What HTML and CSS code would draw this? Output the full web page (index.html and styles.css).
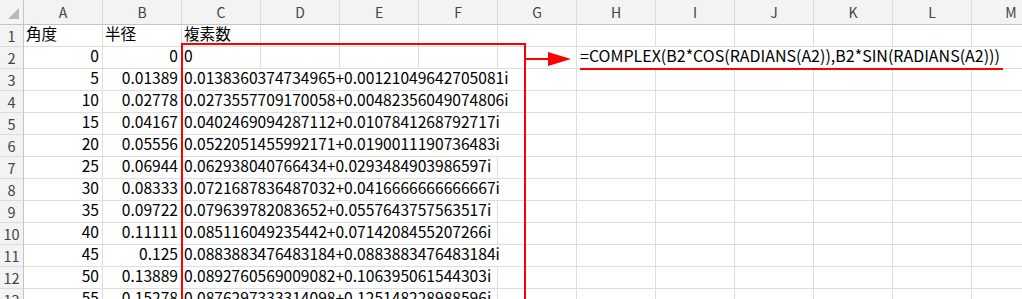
FILE: index.html
```html
<!DOCTYPE html>
<html lang="ja">
<head>
<meta charset="utf-8">
<title>COMPLEX</title>
<link rel="stylesheet" href="styles.css">
</head>
<body>
<div class="sheet">
  <div class="grid">
    <div class="corner"><svg width="23" height="24" viewBox="0 0 23 24"><polygon points="19,8 19,19 8,19" fill="#b9b9b9"/></svg></div>
    <div class="ch">A</div><div class="ch">B</div><div class="ch">C</div><div class="ch">D</div><div class="ch">E</div><div class="ch">F</div><div class="ch">G</div><div class="ch">H</div><div class="ch">I</div><div class="ch">J</div><div class="ch">K</div><div class="ch">L</div><div class="ch">M</div>

    <div class="rh">1</div><div class="c">角度</div><div class="c">半径</div><div class="c">複素数</div><div class="c"></div><div class="c"></div><div class="c"></div><div class="c"></div><div class="c"></div><div class="c"></div><div class="c"></div><div class="c"></div><div class="c"></div><div class="c"></div>

    <div class="rh">2</div><div class="c n">0</div><div class="c n">0</div><div class="c">0</div><div class="c"></div><div class="c"></div><div class="c"></div><div class="c"></div><div class="c formula">=COMPLEX(B2*COS(RADIANS(A2)),B2*SIN(RADIANS(A2)))</div>

    <div class="rh">3</div><div class="c n">5</div><div class="c n">0.01389</div><div class="c s5">0.0138360374734965+0.00121049642705081i</div><div class="c"></div><div class="c"></div><div class="c"></div><div class="c"></div><div class="c"></div><div class="c"></div>

    <div class="rh">4</div><div class="c n">10</div><div class="c n">0.02778</div><div class="c s5">0.0273557709170058+0.00482356049074806i</div><div class="c"></div><div class="c"></div><div class="c"></div><div class="c"></div><div class="c"></div><div class="c"></div>

    <div class="rh">5</div><div class="c n">15</div><div class="c n">0.04167</div><div class="c s5">0.0402469094287112+0.0107841268792717i</div><div class="c"></div><div class="c"></div><div class="c"></div><div class="c"></div><div class="c"></div><div class="c"></div>

    <div class="rh">6</div><div class="c n">20</div><div class="c n">0.05556</div><div class="c s5">0.0522051455992171+0.0190011190736483i</div><div class="c"></div><div class="c"></div><div class="c"></div><div class="c"></div><div class="c"></div><div class="c"></div>

    <div class="rh">7</div><div class="c n">25</div><div class="c n">0.06944</div><div class="c s4">0.062938040766434+0.0293484903986597i</div><div class="c"></div><div class="c"></div><div class="c"></div><div class="c"></div><div class="c"></div><div class="c"></div><div class="c"></div>

    <div class="rh">8</div><div class="c n">30</div><div class="c n">0.08333</div><div class="c s5">0.0721687836487032+0.0416666666666667i</div><div class="c"></div><div class="c"></div><div class="c"></div><div class="c"></div><div class="c"></div><div class="c"></div>

    <div class="rh">9</div><div class="c n">35</div><div class="c n">0.09722</div><div class="c s4">0.079639782083652+0.0557643757563517i</div><div class="c"></div><div class="c"></div><div class="c"></div><div class="c"></div><div class="c"></div><div class="c"></div><div class="c"></div>

    <div class="rh">10</div><div class="c n">40</div><div class="c n">0.11111</div><div class="c s4">0.085116049235442+0.0714208455207266i</div><div class="c"></div><div class="c"></div><div class="c"></div><div class="c"></div><div class="c"></div><div class="c"></div><div class="c"></div>

    <div class="rh">11</div><div class="c n">45</div><div class="c n">0.125</div><div class="c s5">0.0883883476483184+0.0883883476483184i</div><div class="c"></div><div class="c"></div><div class="c"></div><div class="c"></div><div class="c"></div><div class="c"></div>

    <div class="rh">12</div><div class="c n">50</div><div class="c n">0.13889</div><div class="c s4">0.0892760569009082+0.106395061544303i</div><div class="c"></div><div class="c"></div><div class="c"></div><div class="c"></div><div class="c"></div><div class="c"></div><div class="c"></div>

    <div class="rh">13</div><div class="c n">55</div><div class="c n">0.15278</div><div class="c s4">0.0876297333314098+0.125148228988596i</div><div class="c"></div><div class="c"></div><div class="c"></div><div class="c"></div><div class="c"></div><div class="c"></div><div class="c"></div>
  </div>

  <div class="box"></div>
  <div class="arrow-line"></div>
  <svg class="arrow-head" width="23" height="14" viewBox="0 0 23 14"><polygon points="0,0 23,7 0,14" fill="#ff0000"/></svg>
  <div class="formula-underline"></div>
</div>
</body>
</html>
```
FILE: styles.css
```css
html, body {
  margin: 0;
  padding: 0;
  background: #ffffff;
  overflow: hidden;
}

.sheet {
  position: relative;
  width: 1022px;
  height: 299px;
  overflow: hidden;
  font-family: "Noto Sans CJK JP", "Noto Sans", sans-serif;
  color: #000;
}

.grid {
  display: grid;
  grid-template-columns: 24px repeat(13, 79px);
  grid-template-rows: 25px repeat(13, 22px);
}

.grid > div {
  box-sizing: border-box;
  white-space: nowrap;
}

.corner {
  background: #f3f3f3;
  border-right: 1px solid #c4c4c4;
  border-bottom: 1px solid #c4c4c4;
}

.corner svg {
  display: block;
}

.ch {
  background: #f3f3f3;
  border-right: 1px solid #dcdcdc;
  border-bottom: 1px solid #c4c4c4;
  text-align: center;
  color: #444;
  font-size: 14px;
  line-height: 25px;
}

.rh {
  background: #f3f3f3;
  border-right: 1px solid #c4c4c4;
  border-bottom: 1px solid #dcdcdc;
  text-align: center;
  color: #444;
  font-size: 14.5px;
  line-height: 22px;
}

.c {
  border-right: 1px solid #dedede;
  border-bottom: 1px solid #dedede;
  font-size: 15.6px;
  line-height: 15px;
  padding: 1px 3px 0 2px;
  overflow: visible;
}

.n {
  text-align: right;
}

.s4 {
  grid-column: span 4;
}

.s5 {
  grid-column: span 5;
}

.formula {
  grid-column: span 6;
  padding-left: 3px;
  font-size: 16px;
}

.box {
  position: absolute;
  left: 181px;
  top: 43px;
  width: 341px;
  height: 300px;
  border: 2px solid #ff0000;
  box-sizing: content-box;
}

.arrow-line {
  position: absolute;
  left: 526px;
  top: 58px;
  width: 24px;
  height: 2px;
  background: #ff0000;
}

.arrow-head {
  position: absolute;
  left: 548px;
  top: 52px;
  display: block;
}

.formula-underline {
  position: absolute;
  left: 580px;
  top: 68px;
  width: 423px;
  height: 2px;
  background: #ff0000;
}
```
